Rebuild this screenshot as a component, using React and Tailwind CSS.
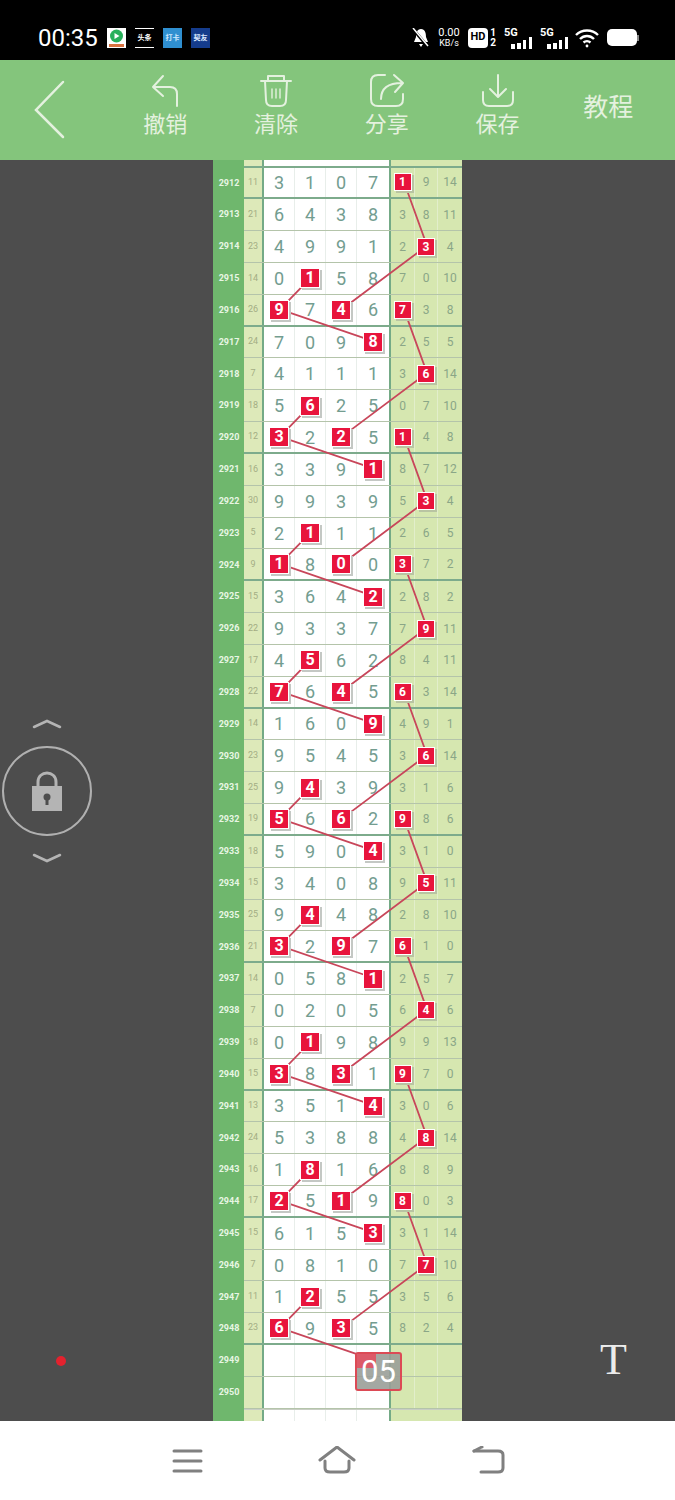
import React from "react";

// [issue, sum, [4 digits], [3 digits], marked main col or cols, marked side col]
const ROWS = [
  [2912, 11, [3, 1, 0, 7], [1, 9, 14], [], 0],
  [2913, 21, [6, 4, 3, 8], [3, 8, 11], [], -1],
  [2914, 23, [4, 9, 9, 1], [2, 3, 4], [], 1],
  [2915, 14, [0, 1, 5, 8], [7, 0, 10], [1], -1],
  [2916, 26, [9, 7, 4, 6], [7, 3, 8], [0, 2], 0],
  [2917, 24, [7, 0, 9, 8], [2, 5, 5], [3], -1],
  [2918, 7, [4, 1, 1, 1], [3, 6, 14], [], 1],
  [2919, 18, [5, 6, 2, 5], [0, 7, 10], [1], -1],
  [2920, 12, [3, 2, 2, 5], [1, 4, 8], [0, 2], 0],
  [2921, 16, [3, 3, 9, 1], [8, 7, 12], [3], -1],
  [2922, 30, [9, 9, 3, 9], [5, 3, 4], [], 1],
  [2923, 5, [2, 1, 1, 1], [2, 6, 5], [1], -1],
  [2924, 9, [1, 8, 0, 0], [3, 7, 2], [0, 2], 0],
  [2925, 15, [3, 6, 4, 2], [2, 8, 2], [3], -1],
  [2926, 22, [9, 3, 3, 7], [7, 9, 11], [], 1],
  [2927, 17, [4, 5, 6, 2], [8, 4, 11], [1], -1],
  [2928, 22, [7, 6, 4, 5], [6, 3, 14], [0, 2], 0],
  [2929, 14, [1, 6, 0, 9], [4, 9, 1], [3], -1],
  [2930, 23, [9, 5, 4, 5], [3, 6, 14], [], 1],
  [2931, 25, [9, 4, 3, 9], [3, 1, 6], [1], -1],
  [2932, 19, [5, 6, 6, 2], [9, 8, 6], [0, 2], 0],
  [2933, 18, [5, 9, 0, 4], [3, 1, 0], [3], -1],
  [2934, 15, [3, 4, 0, 8], [9, 5, 11], [], 1],
  [2935, 25, [9, 4, 4, 8], [2, 8, 10], [1], -1],
  [2936, 21, [3, 2, 9, 7], [6, 1, 0], [0, 2], 0],
  [2937, 14, [0, 5, 8, 1], [2, 5, 7], [3], -1],
  [2938, 7, [0, 2, 0, 5], [6, 4, 6], [], 1],
  [2939, 18, [0, 1, 9, 8], [9, 9, 13], [1], -1],
  [2940, 15, [3, 8, 3, 1], [9, 7, 0], [0, 2], 0],
  [2941, 13, [3, 5, 1, 4], [3, 0, 6], [3], -1],
  [2942, 24, [5, 3, 8, 8], [4, 8, 14], [], 1],
  [2943, 16, [1, 8, 1, 6], [8, 8, 9], [1], -1],
  [2944, 17, [2, 5, 1, 9], [8, 0, 3], [0, 2], 0],
  [2945, 15, [6, 1, 5, 3], [3, 1, 14], [3], -1],
  [2946, 7, [0, 8, 1, 0], [7, 7, 10], [], 1],
  [2947, 11, [1, 2, 5, 5], [3, 5, 6], [1], -1],
  [2948, 23, [6, 9, 3, 5], [8, 2, 4], [0, 2], -1],
  [2949, "", ["", "", "", ""], ["", "", ""], [], -1],
  [2950, "", ["", "", "", ""], ["", "", ""], [], -1],
];

const COL_X = [67, 98, 129, 160];
const SIDE_X = [191, 214];
const rowY = (n) => 22 + (n - 2912) * 31.83;

function buildLines() {
  const lines = [];
  for (let n = 2915; n <= 2947; n += 4) {
    lines.push([[COL_X[1], rowY(n)], [COL_X[0], rowY(n + 1)], [COL_X[3], rowY(n + 2)]]);
  }
  for (let n = 2912; n <= 2944; n += 4) {
    lines.push([[SIDE_X[0], rowY(n)], [SIDE_X[1], rowY(n + 2)], [COL_X[2], rowY(n + 4)]]);
  }
  return lines;
}

function Row({ row }) {
  const [issue, sum, digits, side, marked, sideMark] = row;
  const group = issue >= 2912 && (issue - 2912) % 4 === 0 && issue <= 2948;
  return (
    <div className="flex h-[31.83px]">
      <div className="w-[31px] bg-[#6fb76d] flex items-center justify-center text-[9px] font-bold text-[#e8f6e4] pl-[1px]">
        {issue}
      </div>
      <div className={`flex flex-1 ${group ? "border-b-2 border-[#7dab8c]" : "border-b border-[#b4c4aa]"}`}>
        <div className="w-[20px] bg-[#dde9b9] border-r-2 border-[#74aa86] flex items-center justify-center text-[9px] text-[#a3ad84]">
          {sum}
        </div>
        <div className="w-[125px] bg-white grid grid-cols-[31px_31px_31px_32px]">
          {digits.map((d, i) => (
            <div key={i} className="flex items-center justify-center border-r border-[#e8eeea] last:border-r-0 text-[18px] text-[#739d90]">
              {marked.includes(i) ? (
                <span className="relative z-20 w-[20px] h-[20px] flex items-center justify-center bg-[#e8143c] border border-white shadow-[2px_2px_0_#c4c8c4] text-white font-bold text-[16px]">
                  {d}
                </span>
              ) : d}
            </div>
          ))}
        </div>
        <div className="flex-1 bg-[#d6e7b0] border-l-2 border-[#74aa86] grid grid-cols-[24px_23px_24px]">
          {side.map((d, i) => (
            <div key={i} className="flex items-center justify-center border-r border-[#e2eecb] last:border-r-0 text-[12px] text-[#8aa687]">
              {sideMark === i ? (
                <span className="relative z-20 w-[18px] h-[18px] flex items-center justify-center bg-[#e8143c] border border-white shadow-[2px_2px_0_#b9c4a2] text-white font-bold text-[12px]">
                  {d}
                </span>
              ) : d}
            </div>
          ))}
        </div>
      </div>
    </div>
  );
}

function Grid() {
  return (
    <div className="relative w-[249px] h-full overflow-hidden">
      <div className="flex h-[7.5px]">
        <div className="w-[31px] bg-[#6fb76d]" />
        <div className="flex flex-1 border-b-2 border-[#7dab8c]">
          <div className="w-[20px] bg-[#dde9b9] border-r-2 border-[#74aa86]" />
          <div className="w-[125px] bg-white" />
          <div className="flex-1 bg-[#d6e7b0] border-l-2 border-[#74aa86]" />
        </div>
      </div>
      {ROWS.map((r) => <Row key={r[0]} row={r} />)}
      <div className="flex h-[20px]">
        <div className="w-[31px] bg-[#6fb76d]" />
        <div className="flex flex-1 border-t border-[#c8cec4]">
          <div className="w-[20px] bg-[#dde9b9] border-r-2 border-[#74aa86]" />
          <div className="w-[125px] bg-white grid grid-cols-[31px_31px_31px_32px]">
            <div className="border-r border-[#e8eeea]" />
            <div className="border-r border-[#e8eeea]" />
            <div className="border-r border-[#e8eeea]" />
          </div>
          <div className="flex-1 bg-[#d6e7b0] border-l-2 border-[#74aa86]" />
        </div>
      </div>

      <svg className="absolute left-0 top-0 z-10 w-[249px] h-[1261px]" viewBox="0 0 249 1261" fill="none">
        {buildLines().map((pts, i) => (
          <polyline key={i} points={pts.map((p) => p.join(",")).join(" ")} stroke="#c8465a" strokeWidth="1.8" />
        ))}
      </svg>

      {/* floating number picker */}
      <div className="absolute z-30 left-[142px] top-[1192px] w-[47px] h-[39px] rounded-[3px] border-2 border-[#dc4a55] bg-[#9a9f98]/90 overflow-hidden flex items-center justify-center">
        <div className="absolute left-0 top-0 w-[19px] h-[14px] bg-[#dc5a68]" />
        <span className="relative text-[31px] leading-none text-white">05</span>
      </div>
    </div>
  );
}

function AppIcon({ className, children }) {
  return (
    <div className={`w-[19px] h-[20px] flex items-center justify-center overflow-hidden text-[7px] font-bold leading-[8px] ${className}`}>
      {children}
    </div>
  );
}

function StatusBar() {
  return (
    <div className="h-[60px] bg-black flex items-center text-white pt-[15px] pl-[38px]">
      <span className="text-[24px] w-[69px] leading-none">00:35</span>
      <div className="flex gap-[9px]">
        <AppIcon className="bg-white">
          <svg width="19" height="20" viewBox="0 0 19 20">
            <circle cx="9.5" cy="8" r="6.5" fill="#27b05a" />
            <path d="M7.5 5 L12.5 8 L7.5 11 Z" fill="#fff" />
            <rect x="2" y="16" width="15" height="3" fill="#d9723f" />
          </svg>
        </AppIcon>
        <AppIcon className="bg-black border-y border-white text-white">头条</AppIcon>
        <AppIcon className="bg-[#2f8fd0] text-[#cfeaff]">打卡</AppIcon>
        <AppIcon className="bg-[#153c8c] text-[#dbe8ff]">契友</AppIcon>
      </div>
      <div className="ml-[202px] flex items-center">
        <svg width="18" height="20" viewBox="0 0 18 20" fill="#fff">
          <path d="M9 1 C5 1 4 5 4 9 L2 14 H16 L14 9 C14 5 13 1 9 1 Z M7 16 H11 L9 19 Z" />
          <path d="M1 1 L16 19" stroke="#000" strokeWidth="3" />
          <path d="M1 0 L16 18" stroke="#fff" strokeWidth="1.5" />
        </svg>
        <div className="ml-[6px] w-[26px] flex flex-col items-center text-[10px] leading-[10px]">
          <span className="text-[11px]">0.00</span>
          <span className="text-[9px]">KB/s</span>
        </div>
        <div className="ml-[6px] w-[20px] h-[20px] rounded-[4px] bg-white text-black text-[11px] font-bold flex items-center justify-center">HD</div>
        <div className="ml-[1px] w-[8px] flex flex-col items-center text-[10px] font-bold leading-[10px]">
          <span>1</span>
          <span>2</span>
        </div>
        <Signal />
        <Signal />
        <svg className="ml-[6px]" width="24" height="20" viewBox="0 0 24 20" fill="none" stroke="#fff" strokeWidth="2.4">
          <path d="M1 7 C7 1 17 1 23 7" />
          <path d="M5 11 C9 7 15 7 19 11" />
          <path d="M8.5 14.5 C10.5 12.8 13.5 12.8 15.5 14.5" />
          <circle cx="12" cy="18" r="1.4" fill="#fff" stroke="none" />
        </svg>
        <div className="ml-[8px] w-[30px] h-[17px] rounded-[5px] bg-white" />
        <div className="w-[2px] h-[6px] bg-[#888]" />
      </div>
    </div>
  );
}

function Signal() {
  return (
    <div className="relative ml-[7px] w-[29px] h-[22px]">
      <span className="absolute left-0 top-0 text-[11px] font-bold leading-[12px]">5G</span>
      <svg className="absolute left-[5px] bottom-0" width="24" height="14" viewBox="0 0 24 14" fill="#fff">
        <rect x="2" y="9" width="4" height="5" />
        <rect x="8" y="8" width="4" height="6" />
        <rect x="14" y="5" width="3" height="9" />
        <rect x="20" y="2" width="3" height="12" />
      </svg>
    </div>
  );
}

function ToolIcon({ children }) {
  return (
    <svg width="40" height="34" viewBox="0 0 40 34" fill="none" stroke="#e4f1df" strokeWidth="2" strokeLinecap="round" strokeLinejoin="round">
      {children}
    </svg>
  );
}

function ToolButton({ label, children }) {
  return (
    <div className="self-start mt-[13px] w-[110.75px] flex flex-col items-center text-[22px] leading-[26px] text-[#e4f1df]">
      {children}
      <span className="mt-[5px]">{label}</span>
    </div>
  );
}

function Toolbar() {
  return (
    <div className="h-[100px] bg-[#84c57c] flex items-center">
      <div className="w-[110px] pl-[32px]">
        <svg width="36" height="60" viewBox="0 0 36 60" fill="none" stroke="#e4f1df" strokeWidth="2.5" strokeLinecap="round">
          <path d="M31 2 L4 30 L31 57" />
        </svg>
      </div>
      <ToolButton label="撤销">
        <ToolIcon>
          <path d="M18 3 L8 14 L18 23 M8 14 H25 Q32 14 32 21 V33" />
        </ToolIcon>
      </ToolButton>
      <ToolButton label="清除">
        <ToolIcon>
          <path d="M5 8 H35 M12 8 V3 H28 V8 M9 8 L10 27 Q10 33 16 33 H24 Q30 33 30 27 L31 8" />
          <path d="M16 16 V25 M20 16 V25 M24 16 V25" strokeWidth="1.4" />
        </ToolIcon>
      </ToolButton>
      <ToolButton label="分享">
        <ToolIcon>
          <path d="M18 2 H11 Q4 2 4 9 V26 Q4 33 11 33 H29 Q36 33 36 26 V21" />
          <path d="M14 26 Q14 10 35 10 M27 2 L36 10 L28 19" />
        </ToolIcon>
      </ToolButton>
      <ToolButton label="保存">
        <ToolIcon>
          <path d="M20 2 V23 M12 16 L20 24 L28 16" />
          <path d="M5 19 V27 Q5 33 11 33 H29 Q35 33 35 27 V19" />
        </ToolIcon>
      </ToolButton>
      <div className="w-[110.75px] mb-[4px] text-center text-[25px] text-[#e4f1df]">教程</div>
    </div>
  );
}

function LockControl() {
  return (
    <div className="ml-[2px] mt-[559px] w-[90px] flex flex-col items-center gap-[17px]">
      <svg width="30" height="10" viewBox="0 0 30 10" fill="none" stroke="#b4b4b4" strokeWidth="2.5" strokeLinecap="round">
        <path d="M2 8 L15 2 L28 8" />
      </svg>
      <div className="w-[90px] h-[90px] rounded-full border-[2.5px] border-[#b0b0b0] flex items-center justify-center">
        <svg width="30" height="40" viewBox="0 0 30 40" fill="none">
          <path d="M6 16 V11 C6 -1 24 -1 24 11 V16" stroke="#b4b4b4" strokeWidth="3" />
          <rect x="0" y="15" width="30" height="25" fill="#b4b4b4" />
          <circle cx="15" cy="26" r="3.5" fill="#4d4d4d" />
          <rect x="13.5" y="27" width="3" height="7" fill="#4d4d4d" />
        </svg>
      </div>
      <svg width="30" height="10" viewBox="0 0 30 10" fill="none" stroke="#b4b4b4" strokeWidth="2.5" strokeLinecap="round">
        <path d="M2 2 L15 8 L28 2" />
      </svg>
    </div>
  );
}

function NavBar() {
  return (
    <div className="h-[79px] bg-white flex items-start pt-[25px] pl-[171px]">
      <svg width="32" height="30" viewBox="0 0 32 30" fill="none" stroke="#808080" strokeWidth="3" strokeLinecap="round">
        <path d="M3 5 H30 M3 15 H30 M3 25 H30" />
      </svg>
      <svg className="ml-[115px]" width="38" height="30" viewBox="0 0 38 30" fill="none" stroke="#808080" strokeWidth="3" strokeLinecap="round" strokeLinejoin="round">
        <path d="M2 14 L19 1 L36 14" />
        <path d="M7 15 V22 Q7 26 12 26 H26 Q31 26 31 22 V15" />
      </svg>
      <svg className="ml-[115px]" width="34" height="30" viewBox="0 0 34 30" fill="none" stroke="#808080" strokeWidth="3" strokeLinecap="round" strokeLinejoin="round">
        <path d="M3 5 H27 Q32 5 32 9 V22 Q32 26 27 26 H10" />
        <path d="M3 5 L11 1" />
      </svg>
    </div>
  );
}

export default function App() {
  return (
    <div className="w-[675px] h-[1500px] flex flex-col bg-[#4d4d4d] overflow-hidden font-['Roboto','Noto_Sans_CJK_SC',sans-serif]">
      <StatusBar />
      <Toolbar />
      <div className="h-[1261px] flex">
        <div className="w-[213px] flex flex-col">
          <LockControl />
          <div className="ml-[56px] mt-[493px] w-[10px] h-[10px] rounded-full bg-[#e3222e]" />
        </div>
        <Grid />
        <div className="flex-1 flex flex-col items-start pl-[138px] pt-[1173px]">
          <span className="font-['Liberation_Serif',serif] text-[44px] leading-[54px] text-[#ececec]">T</span>
        </div>
      </div>
      <NavBar />
    </div>
  );
}
